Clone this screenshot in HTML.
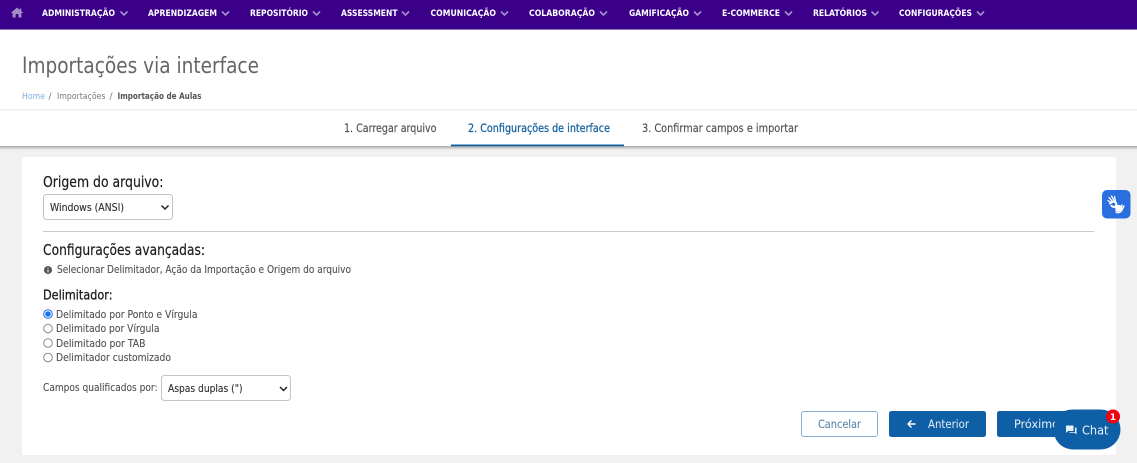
<!DOCTYPE html>
<html lang="pt-BR">
<head>
<meta charset="utf-8">
<title>Importações via interface</title>
<style>
html,body{margin:0;padding:0;width:1137px;height:463px;overflow:hidden;background:#f1f1f1}
svg{display:block}
text{font-family:"DejaVu Sans","Liberation Sans",sans-serif}
.n{font-size:9px;font-weight:700;fill:#fff}
.c{fill:none;stroke:#a98fd0;stroke-width:1.6}
.t{font-size:11.500px;fill:#4f4f4f;stroke:#4f4f4f;stroke-width:.15}
.r{font-size:11px;fill:#505050;stroke:#505050;stroke-width:.12}
.h{font-size:15px;fill:#1c1c1c;stroke:#1c1c1c;stroke-width:.2}
.s{font-size:11px;fill:#2c2c2c;stroke:#2c2c2c;stroke-width:.12}
</style>
</head>
<body>
<svg width="1137" height="463" viewBox="0 0 1137 463" xmlns="http://www.w3.org/2000/svg">
<defs>
<linearGradient id="sh" x1="0" y1="0" x2="0" y2="1"><stop offset="0" stop-color="#a8a8a8"/><stop offset="1" stop-color="#f1f1f1"/></linearGradient>
</defs>
<rect width="1137" height="463" fill="#f1f1f1"/>
<rect width="1137" height="146" fill="#fff"/>
<rect width="1137" height="29" fill="#3a008a"/>
<rect y="29" width="1137" height="1" fill="#8f78b8"/>
<path d="M17 7.500 L19.800 10V8.500H21.300V11.300L23.200 13H21.400V17.500H18.400V14H15.600V17.500H12.600V13H10.800Z" fill="#a28cc8"/>

<text class="n" x="42" y="16" textLength="73" lengthAdjust="spacingAndGlyphs">ADMINISTRAÇÃO</text><path class="c" d="M120.500 11.500l3.500 3.500 3.500-3.500"/>
<text class="n" x="148" y="16" textLength="69" lengthAdjust="spacingAndGlyphs">APRENDIZAGEM</text><path class="c" d="M222 11.500l3.500 3.500 3.500-3.500"/>
<text class="n" x="250" y="16" textLength="58" lengthAdjust="spacingAndGlyphs">REPOSITÓRIO</text><path class="c" d="M313 11.500l3.500 3.500 3.500-3.500"/>
<text class="n" x="341" y="16" textLength="56.500" lengthAdjust="spacingAndGlyphs">ASSESSMENT</text><path class="c" d="M402 11.500l3.500 3.500 3.500-3.500"/>
<text class="n" x="430.500" y="16" textLength="65.500" lengthAdjust="spacingAndGlyphs">COMUNICAÇÃO</text><path class="c" d="M501 11.500l3.500 3.500 3.500-3.500"/>
<text class="n" x="529" y="16" textLength="66" lengthAdjust="spacingAndGlyphs">COLABORAÇÃO</text><path class="c" d="M600 11.500l3.500 3.500 3.500-3.500"/>
<text class="n" x="629" y="16" textLength="60" lengthAdjust="spacingAndGlyphs">GAMIFICAÇÃO</text><path class="c" d="M694 11.500l3.500 3.500 3.500-3.500"/>
<text class="n" x="722" y="16" textLength="58" lengthAdjust="spacingAndGlyphs">E-COMMERCE</text><path class="c" d="M785 11.500l3.500 3.500 3.500-3.500"/>
<text class="n" x="813" y="16" textLength="54" lengthAdjust="spacingAndGlyphs">RELATÓRIOS</text><path class="c" d="M871.500 11.500l3.500 3.500 3.500-3.500"/>
<text class="n" x="899" y="16" textLength="73" lengthAdjust="spacingAndGlyphs">CONFIGURAÇÕES</text><path class="c" d="M977 11.500l3.500 3.500 3.500-3.500"/>

<text x="22" y="73" font-size="22" fill="#666" textLength="237" lengthAdjust="spacingAndGlyphs">Importações via interface</text>
<text x="22" y="99" font-size="9" fill="#7fb0dc" textLength="23" lengthAdjust="spacingAndGlyphs">Home</text>
<text x="48.500" y="99" font-size="9" fill="#777">/</text>
<text x="57" y="99" font-size="9" fill="#777" textLength="48.500" lengthAdjust="spacingAndGlyphs">Importações</text>
<text x="109.500" y="99" font-size="9" fill="#777">/</text>
<text x="117.500" y="99" font-size="9" font-weight="700" fill="#555" textLength="84" lengthAdjust="spacingAndGlyphs">Importação de Aulas</text>

<rect y="109" width="1137" height="1.500" fill="#ececec"/>
<text class="t" x="344" y="132" textLength="92.500" lengthAdjust="spacingAndGlyphs">1. Carregar arquivo</text>
<text x="468" y="132" font-size="11.500" fill="#14609f" stroke="#14609f" stroke-width=".25" textLength="142" lengthAdjust="spacingAndGlyphs">2. Configurações de interface</text>
<text class="t" x="642" y="132" textLength="156" lengthAdjust="spacingAndGlyphs">3. Confirmar campos e importar</text>
<rect y="146" width="1137" height="4" fill="url(#sh)"/>
<rect x="451" y="144.500" width="173" height="1.800" fill="#14609f"/>

<rect x="22" y="157" width="1094" height="298" fill="#fff"/>

<text class="h" x="43" y="187" textLength="120.500" lengthAdjust="spacingAndGlyphs">Origem do arquivo:</text>
<rect x="43.500" y="194.500" width="129" height="25" rx="3" fill="#fff" stroke="#c4c4c4"/>
<text class="s" x="50" y="211" textLength="74" lengthAdjust="spacingAndGlyphs">Windows (ANSI)</text>
<path d="M161.500 205.500l3.500 3.500 3.500-3.500" fill="none" stroke="#222" stroke-width="1.500"/>
<rect x="43" y="231" width="1051" height="1" fill="#c8c8c8"/>

<text class="h" x="43" y="255" textLength="162" lengthAdjust="spacingAndGlyphs">Configurações avançadas:</text>
<circle cx="48" cy="270" r="4" fill="#555"/>
<rect x="47.500" y="269.500" width="1" height="3" fill="#fff"/><rect x="47.500" y="267.500" width="1" height="1" fill="#fff"/>
<text class="r" x="57" y="273" textLength="294" lengthAdjust="spacingAndGlyphs">Selecionar Delimitador, Ação da Importação e Origem do arquivo</text>

<text x="43" y="299.500" font-size="13.500" fill="#1c1c1c" stroke="#1c1c1c" stroke-width=".3" textLength="69.500" lengthAdjust="spacingAndGlyphs">Delimitador:</text>
<circle cx="48" cy="314" r="4.300" fill="#fff" stroke="#1a73e8" stroke-width="1"/><circle cx="48" cy="314" r="2.800" fill="#1a73e8"/>
<circle cx="48" cy="328.500" r="4.300" fill="#fff" stroke="#8a8a8a"/>
<circle cx="48" cy="343" r="4.300" fill="#fff" stroke="#8a8a8a"/>
<circle cx="48" cy="357.500" r="4.300" fill="#fff" stroke="#8a8a8a"/>
<text class="r" x="56" y="318" textLength="141.500" lengthAdjust="spacingAndGlyphs">Delimitado por Ponto e Vírgula</text>
<text class="r" x="56" y="332" textLength="103.500" lengthAdjust="spacingAndGlyphs">Delimitado por Vírgula</text>
<text class="r" x="56" y="347" textLength="89.500" lengthAdjust="spacingAndGlyphs">Delimitado por TAB</text>
<text class="r" x="56" y="361" textLength="115" lengthAdjust="spacingAndGlyphs">Delimitador customizado</text>

<text class="r" x="43" y="391" textLength="114.500" lengthAdjust="spacingAndGlyphs">Campos qualificados por:</text>
<rect x="161.500" y="375.500" width="129" height="25" rx="3" fill="#fff" stroke="#c4c4c4"/>
<text class="s" x="168" y="392" textLength="74.500" lengthAdjust="spacingAndGlyphs">Aspas duplas (")</text>
<path d="M280 387l3.500 3.500 3.500-3.500" fill="none" stroke="#222" stroke-width="1.500"/>

<rect x="801.500" y="411.500" width="76" height="25" rx="2.500" fill="#fff" stroke="#86b0d6"/>
<text x="818" y="428" font-size="11.500" fill="#5f88ad" stroke="#5f88ad" stroke-width=".12" textLength="43" lengthAdjust="spacingAndGlyphs">Cancelar</text>
<rect x="889" y="411" width="97" height="26" rx="2.500" fill="#0f5fa6"/>
<path d="M915.500 424h-7M911.500 420.500l-3.500 3.500 3.500 3.500" fill="none" stroke="#fff" stroke-width="1.400"/>
<text x="928" y="428" font-size="11.500" fill="#e8f0f8" textLength="41" lengthAdjust="spacingAndGlyphs">Anterior</text>
<rect x="997" y="411" width="97" height="26" rx="2.500" fill="#0f5fa6"/>
<text x="1014" y="428" font-size="11.500" fill="#e8f0f8" textLength="45" lengthAdjust="spacingAndGlyphs">Próximo</text>

<path d="M1074 409.500H1100.500A20 20 0 0 1 1100.500 449.500H1074C1062 449.500 1054 441 1054 431C1054 422 1056 409.500 1074 409.500Z" fill="#0f5fa6"/>
<path d="M1066 425.500h7.500v5.500h-5.500l-2 2z" fill="#e8f0f8"/>
<path d="M1075 427.500h1.500v7l-2-1.800h-5v-.7h5.500z" fill="#e8f0f8"/>
<text x="1082" y="434.500" font-size="12.500" fill="#e8f0f8" textLength="26.500" lengthAdjust="spacingAndGlyphs">Chat</text>
<circle cx="1113" cy="416.500" r="7" fill="#f00010"/>
<text x="1113" y="420" font-size="9" font-weight="700" fill="#fff" text-anchor="middle">1</text>

<rect x="1102" y="190" width="28.500" height="28.500" rx="5" fill="#2a6fe0"/>
<g fill="none" stroke="#fff" stroke-linecap="round">
<path d="M1109 197.500l3.500 4M1111.500 196l2.500 4.500M1114.500 196.500l1 4.500M1108 200.500l3.500 2.500" stroke-width="1.300"/>
<path d="M1110 203.500c1-2 5-2.500 6-.5s-.5 4-2.500 4l-2-1.200" stroke-width="2"/>
<path d="M1116 212c1.500 1 4 1 5.500-1l2.500-5M1119.500 205.500l-1.500 5M1122 205l-1 5" stroke-width="1.400"/>
<path d="M1115.500 205.500h4l2 1v3l-3 2-2.500-1z" fill="#fff" stroke-width="1"/>
</g>
</svg>
</body>
</html>
